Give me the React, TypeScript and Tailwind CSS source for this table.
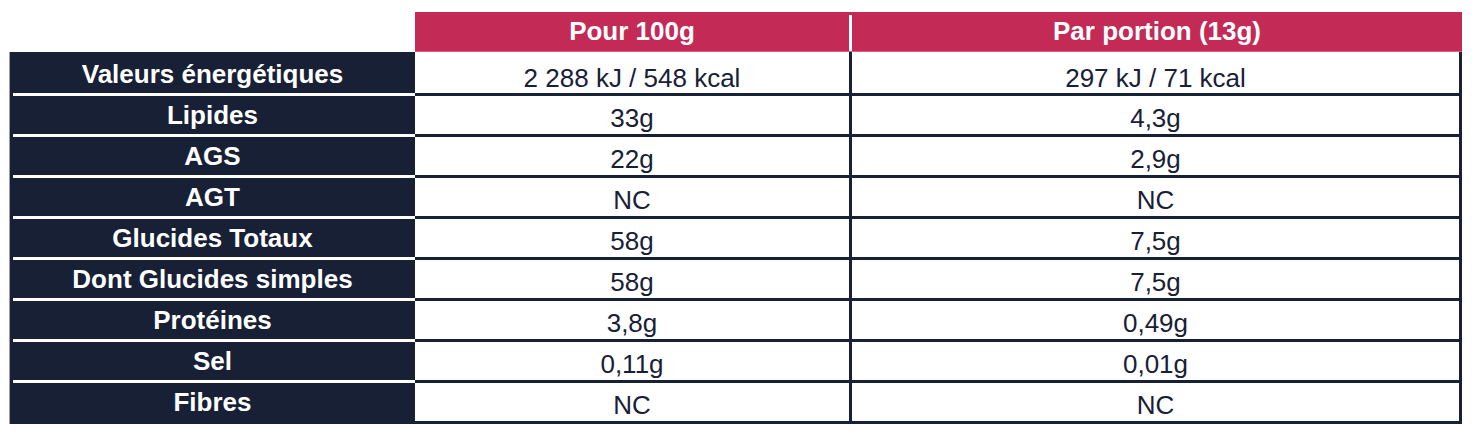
const rows: [string, string, string][] = [
  ["Valeurs énergétiques", "2 288 kJ / 548 kcal", "297 kJ / 71 kcal"],
  ["Lipides", "33g", "4,3g"],
  ["AGS", "22g", "2,9g"],
  ["AGT", "NC", "NC"],
  ["Glucides Totaux", "58g", "7,5g"],
  ["Dont Glucides simples", "58g", "7,5g"],
  ["Protéines", "3,8g", "0,49g"],
  ["Sel", "0,11g", "0,01g"],
  ["Fibres", "NC", "NC"],
];

const font = { fontFamily: '"Liberation Sans", Arial, sans-serif' };

export default function App() {
  return (
    <div className="w-[1482px] h-[444px] bg-white pt-[12px] pl-[9px]" style={font}>
      {/* header */}
      <div className="flex">
        <div className="w-[406px]" />
        <div className="flex h-[40px] bg-[#c32a56] border-b border-[#d9617f]">
          <div className="w-[434px] flex items-center justify-center text-white font-bold text-[26px]">
            Pour 100g
          </div>
          <div className="w-[3px] mt-[3px] bg-white" />
          <div className="w-[610px] flex items-center justify-center text-white font-bold text-[26px]">
            Par portion (13g)
          </div>
        </div>
      </div>

      {/* body */}
      <div className="flex flex-col w-[1453px]">
        {rows.map(([label, a, b], i) => {
          const first = i === 0;
          const last = i === rows.length - 1;
          return (
            <div key={label} className="flex">
              <div className="w-[406px] flex flex-col border-l border-[#9aa0aa] bg-[#182035]">
                <div
                  className={
                    first
                      ? "h-[41px] pt-[3px] flex items-center justify-center text-white font-bold text-[26px]"
                      : "h-[38px] flex items-center justify-center text-white font-bold text-[26px]"
                  }
                >
                  {label}
                </div>
                {last ? (
                  <div className="h-[2px]" />
                ) : (
                  <div className="h-[3px] ml-[3px] bg-white" />
                )}
              </div>
              <div
                className={
                  first
                    ? "w-[437px] h-[44px] pt-[11px] flex items-center justify-center border-r-[3px] border-b-[3px] border-[#182035] text-[#182035] text-[26px]"
                    : "w-[437px] h-[41px] pt-[7px] flex items-center justify-center border-r-[3px] border-b-[3px] border-[#182035] text-[#182035] text-[26px]"
                }
              >
                {a}
              </div>
              <div
                className={
                  first
                    ? "w-[610px] h-[44px] pt-[11px] flex items-center justify-center border-r-[3px] border-b-[3px] border-[#182035] text-[#182035] text-[26px]"
                    : "w-[610px] h-[41px] pt-[7px] flex items-center justify-center border-r-[3px] border-b-[3px] border-[#182035] text-[#182035] text-[26px]"
                }
              >
                {b}
              </div>
            </div>
          );
        })}
      </div>
    </div>
  );
}
